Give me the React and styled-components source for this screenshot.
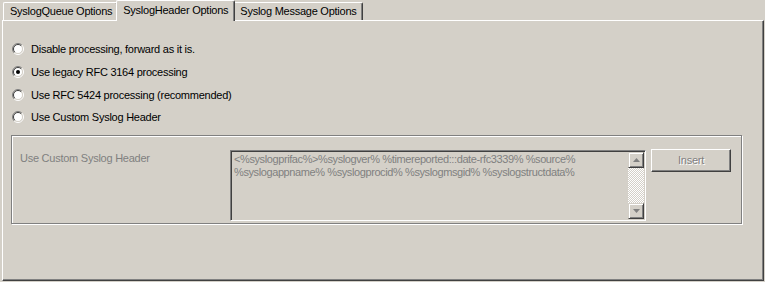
import React from "react";
import styled, { createGlobalStyle } from "styled-components";

const Global = createGlobalStyle`
  html, body { margin: 0; padding: 0; background: #d4d0c8; }
  body { font-family: "Liberation Sans", Arial, sans-serif; font-size: 11px; color: #000; letter-spacing: -0.25px; }
`;

const Window = styled.div`
  width: 765px;
  height: 282px;
  background: #d4d0c8;
  box-sizing: border-box;
  padding-left: 2px;
  overflow: hidden;
`;

const TabStrip = styled.div`
  display: flex;
  align-items: flex-end;
  height: 21px;
  margin-bottom: -1px;
  padding-left: 1px;
`;

const Tab = styled.div`
  position: relative;
  box-sizing: border-box;
  height: ${(p) => (p.$active ? "21px" : "18px")};
  margin: ${(p) => (p.$active ? "0 -2px" : "0 0 1px 0")};
  z-index: ${(p) => (p.$active ? 1 : 0)};
  padding: ${(p) => (p.$active ? "2px 6px 0 6px" : "1px 5px 0 6px")};
  background: #d4d0c8;
  border-top: 1px solid #fff;
  border-left: 1px solid #fff;
  border-right: 1px solid #404040;
  border-radius: 2px 2px 0 0;
  box-shadow: inset -1px 0 0 #808080;
  line-height: 14px;
  white-space: nowrap;
`;

const Panel = styled.div`
  box-sizing: border-box;
  width: 762px;
  height: 261px;
  border-top: 1px solid #fff;
  border-left: 1px solid #fff;
  border-right: 1px solid #404040;
  border-bottom: 1px solid #404040;
  box-shadow: inset -1px -1px 0 #808080;
  padding: 17px 20px 0 8px;
`;

const RadioList = styled.div`
  display: flex;
  flex-direction: column;
`;

const RadioRow = styled.label`
  display: flex;
  align-items: center;
  gap: 7px;
  height: 22.7px;
  padding-left: 1px;
`;

const RadioSvg = styled.svg`
  width: 12px;
  height: 12px;
  flex: none;
`;

function Radio({ checked }) {
  return (
    <RadioSvg viewBox="0 0 12 12">
      <circle cx="6" cy="6" r="4.5" fill="#fff" />
      <path d="M2.1 9.9 A5.5 5.5 0 0 1 9.9 2.1" fill="none" stroke="#808080" strokeWidth="1" />
      <path d="M9.9 2.1 A5.5 5.5 0 0 1 2.1 9.9" fill="none" stroke="#fff" strokeWidth="1" />
      <path d="M2.8 9.2 A4.5 4.5 0 0 1 9.2 2.8" fill="none" stroke="#404040" strokeWidth="1" />
      <path d="M9.2 2.8 A4.5 4.5 0 0 1 2.8 9.2" fill="none" stroke="#d4d0c8" strokeWidth="1" />
      {checked && <circle cx="6" cy="6" r="2" fill="#000" />}
    </RadioSvg>
  );
}

const GroupBox = styled.div`
  box-sizing: border-box;
  margin-top: 6px;
  width: 731px;
  height: 89px;
  border: 1px solid #808080;
  box-shadow: inset 1px 1px 0 #fff, 1px 1px 0 #fff;
  display: grid;
  grid-template-columns: 205px 416px 80px;
  column-gap: 5px;
  align-items: start;
  padding: 14px 0 0 8px;
`;

const DisabledLabel = styled.div`
  color: #808080;
  padding-top: 2px;
`;

const TextBox = styled.div`
  box-sizing: border-box;
  height: 71px;
  border-top: 1px solid #808080;
  border-left: 1px solid #808080;
  border-right: 1px solid #fff;
  border-bottom: 1px solid #fff;
  box-shadow: inset 1px 1px 0 #404040, inset -1px -1px 0 #d4d0c8;
  display: flex;
  padding: 1px;
`;

const TextContent = styled.div`
  flex: 1;
  color: #808080;
  padding: 1px 2px;
  line-height: 13px;
  letter-spacing: -0.4px;
`;

const ScrollBar = styled.div`
  width: 16px;
  display: flex;
  flex-direction: column;
  background: repeating-conic-gradient(#d4d0c8 0 25%, #fff 0 50%) 0 0 / 2px 2px;
`;

const ScrollBtn = styled.div`
  box-sizing: border-box;
  width: 16px;
  height: 16px;
  flex: none;
  background: #d4d0c8;
  border-top: 1px solid #d4d0c8;
  border-left: 1px solid #d4d0c8;
  border-right: 1px solid #404040;
  border-bottom: 1px solid #404040;
  box-shadow: inset 1px 1px 0 #fff, inset -1px -1px 0 #808080;
  display: flex;
  align-items: center;
  justify-content: center;
`;

const Track = styled.div`
  flex: 1;
`;

const Arrow = styled.svg`
  width: 7px;
  height: 4px;
`;

const InsertButton = styled.div`
  box-sizing: border-box;
  height: 23px;
  margin-top: -1px;
  border-top: 1px solid #fff;
  border-left: 1px solid #fff;
  border-right: 1px solid #404040;
  border-bottom: 1px solid #404040;
  box-shadow: inset -1px -1px 0 #808080;
  display: flex;
  align-items: center;
  justify-content: center;
  color: #808080;
  text-shadow: 1px 1px 0 #fff;
`;

export default function App() {
  return (
    <>
      <Global />
      <Window>
        <TabStrip>
          <Tab>SyslogQueue Options</Tab>
          <Tab $active>SyslogHeader Options</Tab>
          <Tab>Syslog Message Options</Tab>
        </TabStrip>
        <Panel>
          <RadioList>
            <RadioRow><Radio />Disable processing, forward as it is.</RadioRow>
            <RadioRow><Radio checked />Use legacy RFC 3164 processing</RadioRow>
            <RadioRow><Radio />Use RFC 5424 processing (recommended)</RadioRow>
            <RadioRow><Radio />Use Custom Syslog Header</RadioRow>
          </RadioList>
          <GroupBox>
            <DisabledLabel>Use Custom Syslog Header</DisabledLabel>
            <TextBox>
              <TextContent>
                &lt;%syslogprifac%&gt;%syslogver% %timereported:::date-rfc3339% %source%
                <br />
                %syslogappname% %syslogprocid% %syslogmsgid% %syslogstructdata%
              </TextContent>
              <ScrollBar>
                <ScrollBtn>
                  <Arrow viewBox="0 0 7 4"><path d="M3.5 0 L7 4 L0 4 Z" fill="#808080" /></Arrow>
                </ScrollBtn>
                <Track />
                <ScrollBtn>
                  <Arrow viewBox="0 0 7 4"><path d="M0 0 L7 0 L3.5 4 Z" fill="#808080" /></Arrow>
                </ScrollBtn>
              </ScrollBar>
            </TextBox>
            <InsertButton>Insert</InsertButton>
          </GroupBox>
        </Panel>
      </Window>
    </>
  );
}
